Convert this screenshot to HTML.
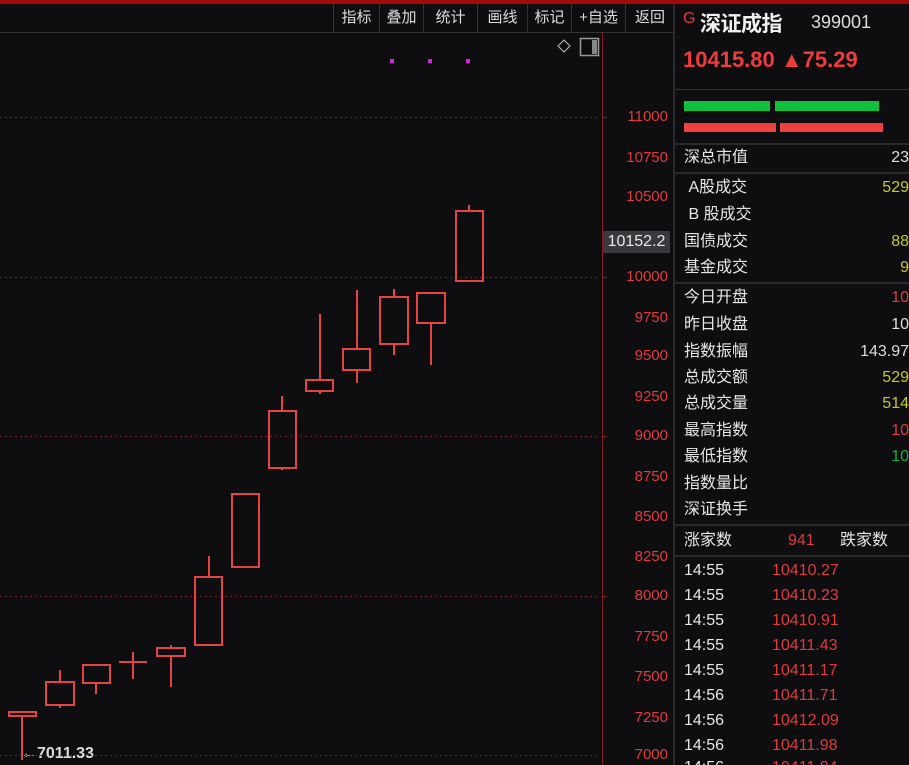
<!DOCTYPE html>
<html style="width:909px;height:765px;overflow:hidden"><head><meta charset="utf-8"><style>
*{margin:0;padding:0;box-sizing:border-box}
body{width:909px;height:765px;overflow:hidden;background:#0e0e11;font-family:"Liberation Sans","Noto Sans CJK SC",sans-serif;position:relative;color:#ddd}
.a{position:absolute;white-space:nowrap}
.tb{position:absolute;top:4px;height:28px;line-height:27px;font-size:15px;color:#ddd;border-left:1px solid #333;text-align:center}
.lab{position:absolute;left:684px;font-size:16px;color:#e6e6e6;line-height:20px}
.v{position:absolute;right:0;font-size:16px;line-height:20px;text-align:right}
.ax{position:absolute;left:608px;width:60px;text-align:right;font-size:15px;color:#e03a3a;line-height:18px}
.tk{position:absolute;left:684px;font-size:16px;color:#e6e6e6;line-height:20px}
.tp{position:absolute;left:772px;font-size:16px;color:#e03a3a;line-height:20px}
.sep{position:absolute;left:675px;right:0;height:2px;background:#2a2a2e}
</style></head><body>
<div class="a" style="left:0;top:0;width:909px;height:4px;background:#a30a0a"></div>
<div class="a" style="left:0;top:32px;width:674px;height:1px;background:#333"></div>
<div class="tb" style="left:333px;width:46px">指标</div>
<div class="tb" style="left:379px;width:44px">叠加</div>
<div class="tb" style="left:423px;width:54px">统计</div>
<div class="tb" style="left:477px;width:50px">画线</div>
<div class="tb" style="left:527px;width:44px">标记</div>
<div class="tb" style="left:571px;width:54px">+自选</div>
<div class="tb" style="left:625px;width:49px">返回</div>
<div class="a" style="left:673px;top:4px;width:2px;height:761px;background:#2a2a2e"></div>
<div class="a" style="left:602px;top:33px;width:1px;height:732px;background:#8a1a1a"></div>
<div class="a" style="left:683px;top:10px;font-size:16px;color:#e03a3a">G</div>
<div class="a" style="left:700px;top:8px;font-size:21px;font-weight:bold;color:#f0f0f0;letter-spacing:-0.5px">深证成指</div>
<div class="a" style="left:811px;top:12px;font-size:18px;color:#ddd">399001</div>
<div class="a" style="left:683px;top:47px;font-size:22px;font-weight:bold;color:#ee3b3b">10415.80 ▲75.29</div>
<div class="a" style="left:675px;top:89px;width:234px;height:1px;background:#333"></div>
<div class="a" style="left:684px;top:101px;width:86px;height:10px;background:#0ec13a"></div>
<div class="a" style="left:775px;top:101px;width:104px;height:10px;background:#0ec13a"></div>
<div class="a" style="left:684px;top:123px;width:92px;height:9px;background:#f04040"></div>
<div class="a" style="left:780px;top:123px;width:103px;height:9px;background:#f04040"></div>
<div class="sep" style="top:143px"></div>
<div class="sep" style="top:172px"></div>
<div class="sep" style="top:282px"></div>
<div class="sep" style="top:524px"></div>
<div class="sep" style="top:555px"></div>
<div class="lab" style="top:148px">深总市值</div><div class="v" style="top:148px;color:#ddd">23</div>
<div class="lab" style="top:178px">&nbsp;A股成交</div><div class="v" style="top:178px;color:#c8c820">529</div>
<div class="lab" style="top:205px">&nbsp;B 股成交</div>
<div class="lab" style="top:232px">国债成交</div><div class="v" style="top:232px;color:#c8c820">88</div>
<div class="lab" style="top:258px">基金成交</div><div class="v" style="top:258px;color:#c8c820">9</div>
<div class="lab" style="top:288px">今日开盘</div><div class="v" style="top:288px;color:#e03a3a">10</div>
<div class="lab" style="top:315px">昨日收盘</div><div class="v" style="top:315px;color:#ddd">10</div>
<div class="lab" style="top:342px">指数振幅</div><div class="v" style="top:342px;color:#ddd">143.97</div>
<div class="lab" style="top:368px">总成交额</div><div class="v" style="top:368px;color:#c8c820">529</div>
<div class="lab" style="top:394px">总成交量</div><div class="v" style="top:394px;color:#c8c820">514</div>
<div class="lab" style="top:421px">最高指数</div><div class="v" style="top:421px;color:#e03a3a">10</div>
<div class="lab" style="top:447px">最低指数</div><div class="v" style="top:447px;color:#10b030">10</div>
<div class="lab" style="top:474px">指数量比</div>
<div class="lab" style="top:500px">深证换手</div>
<div class="lab" style="top:531px">涨家数</div>
<div class="a" style="left:788px;top:531px;font-size:16px;color:#e03a3a;line-height:20px">941</div>
<div class="a" style="left:840px;top:531px;font-size:16px;color:#e6e6e6;line-height:20px">跌家数</div>
<div class="tk" style="top:561px">14:55</div><div class="tp" style="top:561px">10410.27</div>
<div class="tk" style="top:586px">14:55</div><div class="tp" style="top:586px">10410.23</div>
<div class="tk" style="top:611px">14:55</div><div class="tp" style="top:611px">10410.91</div>
<div class="tk" style="top:636px">14:55</div><div class="tp" style="top:636px">10411.43</div>
<div class="tk" style="top:661px">14:55</div><div class="tp" style="top:661px">10411.17</div>
<div class="tk" style="top:686px">14:56</div><div class="tp" style="top:686px">10411.71</div>
<div class="tk" style="top:711px">14:56</div><div class="tp" style="top:711px">10412.09</div>
<div class="tk" style="top:736px">14:56</div><div class="tp" style="top:736px">10411.98</div>

<div class="ax" style="top:108px">11000</div>
<div class="ax" style="top:149px">10750</div>
<div class="ax" style="top:188px">10500</div>
<div class="a" style="left:603px;top:231px;width:67px;height:22px;background:#3a3a3e;color:#e8e8e8;font-size:16px;line-height:22px;text-align:center">10152.2</div>
<div class="ax" style="top:268px">10000</div>
<div class="ax" style="top:309px">9750</div>
<div class="ax" style="top:347px">9500</div>
<div class="ax" style="top:388px">9250</div>
<div class="ax" style="top:427px">9000</div>
<div class="ax" style="top:468px">8750</div>
<div class="ax" style="top:508px">8500</div>
<div class="ax" style="top:548px">8250</div>
<div class="ax" style="top:587px">8000</div>
<div class="ax" style="top:628px">7750</div>
<div class="ax" style="top:668px">7500</div>
<div class="ax" style="top:709px">7250</div>
<div class="ax" style="top:746px">7000</div>
<div class="a" style="left:21px;top:745px;font-size:16px;color:#ddd;font-weight:bold">←7011.33</div>

<svg class="a" style="left:0;top:0" width="674" height="765">
<g stroke="#7a1c1c" stroke-dasharray="2,3" stroke-width="1">
<line x1="0" y1="117.5" x2="600" y2="117.5"/><line x1="0" y1="277.5" x2="600" y2="277.5"/>
<line x1="0" y1="436.5" x2="600" y2="436.5"/><line x1="0" y1="596.5" x2="600" y2="596.5"/>
<line x1="0" y1="755.5" x2="600" y2="755.5"/>
</g>
<g stroke="#8a1a1a"><line x1="603" y1="117.5" x2="607" y2="117.5"/><line x1="603" y1="277.5" x2="607" y2="277.5"/><line x1="603" y1="436.5" x2="607" y2="436.5"/><line x1="603" y1="596.5" x2="607" y2="596.5"/></g>
<rect x="390" y="59" width="4" height="4" fill="#e020e0"/><rect x="428" y="59" width="4" height="4" fill="#e020e0"/><rect x="466" y="59" width="4" height="4" fill="#e020e0"/>
<path d="M564 40 L570 46 L564 52 L558 46Z" fill="none" stroke="#bbb"/>
<rect x="580.5" y="38.5" width="18" height="17" fill="none" stroke="#999" stroke-width="1.5"/><rect x="592" y="40" width="5" height="14" fill="#888"/>
<g fill="none" stroke="#e54444" stroke-width="2">
<rect x="9" y="712" width="27" height="4"/><line x1="22" y1="716" x2="22" y2="760"/>
<rect x="46" y="682" width="28" height="23"/><line x1="60" y1="670" x2="60" y2="682"/><line x1="60" y1="705" x2="60" y2="708"/>
<rect x="83" y="665" width="27" height="18"/><line x1="96" y1="683" x2="96" y2="694"/>
<line x1="119" y1="662" x2="147" y2="662"/><line x1="133" y1="652" x2="133" y2="679"/>
<rect x="157" y="648" width="28" height="8"/><line x1="171" y1="645" x2="171" y2="648"/><line x1="171" y1="656" x2="171" y2="687"/>
<rect x="195" y="577" width="27" height="68"/><line x1="209" y1="556" x2="209" y2="577"/>
<rect x="232" y="494" width="27" height="73"/>
<rect x="269" y="411" width="27" height="57"/><line x1="282" y1="396" x2="282" y2="411"/><line x1="282" y1="468" x2="282" y2="470"/>
<rect x="306" y="380" width="27" height="11"/><line x1="320" y1="314" x2="320" y2="380"/><line x1="320" y1="391" x2="320" y2="394"/>
<rect x="343" y="349" width="27" height="21"/><line x1="357" y1="290" x2="357" y2="349"/><line x1="357" y1="370" x2="357" y2="383"/>
<rect x="380" y="297" width="28" height="47"/><line x1="394" y1="289" x2="394" y2="297"/><line x1="394" y1="344" x2="394" y2="355"/>
<rect x="417" y="293" width="28" height="30"/><line x1="431" y1="323" x2="431" y2="365"/>
<rect x="456" y="211" width="27" height="70"/><line x1="469" y1="205" x2="469" y2="211"/>
</g>
</svg>
<div class="tk" style="top:758px;height:7px;overflow:hidden">14:56</div><div class="tp" style="top:758px;height:7px;overflow:hidden">10411.84</div>
</body></html>
